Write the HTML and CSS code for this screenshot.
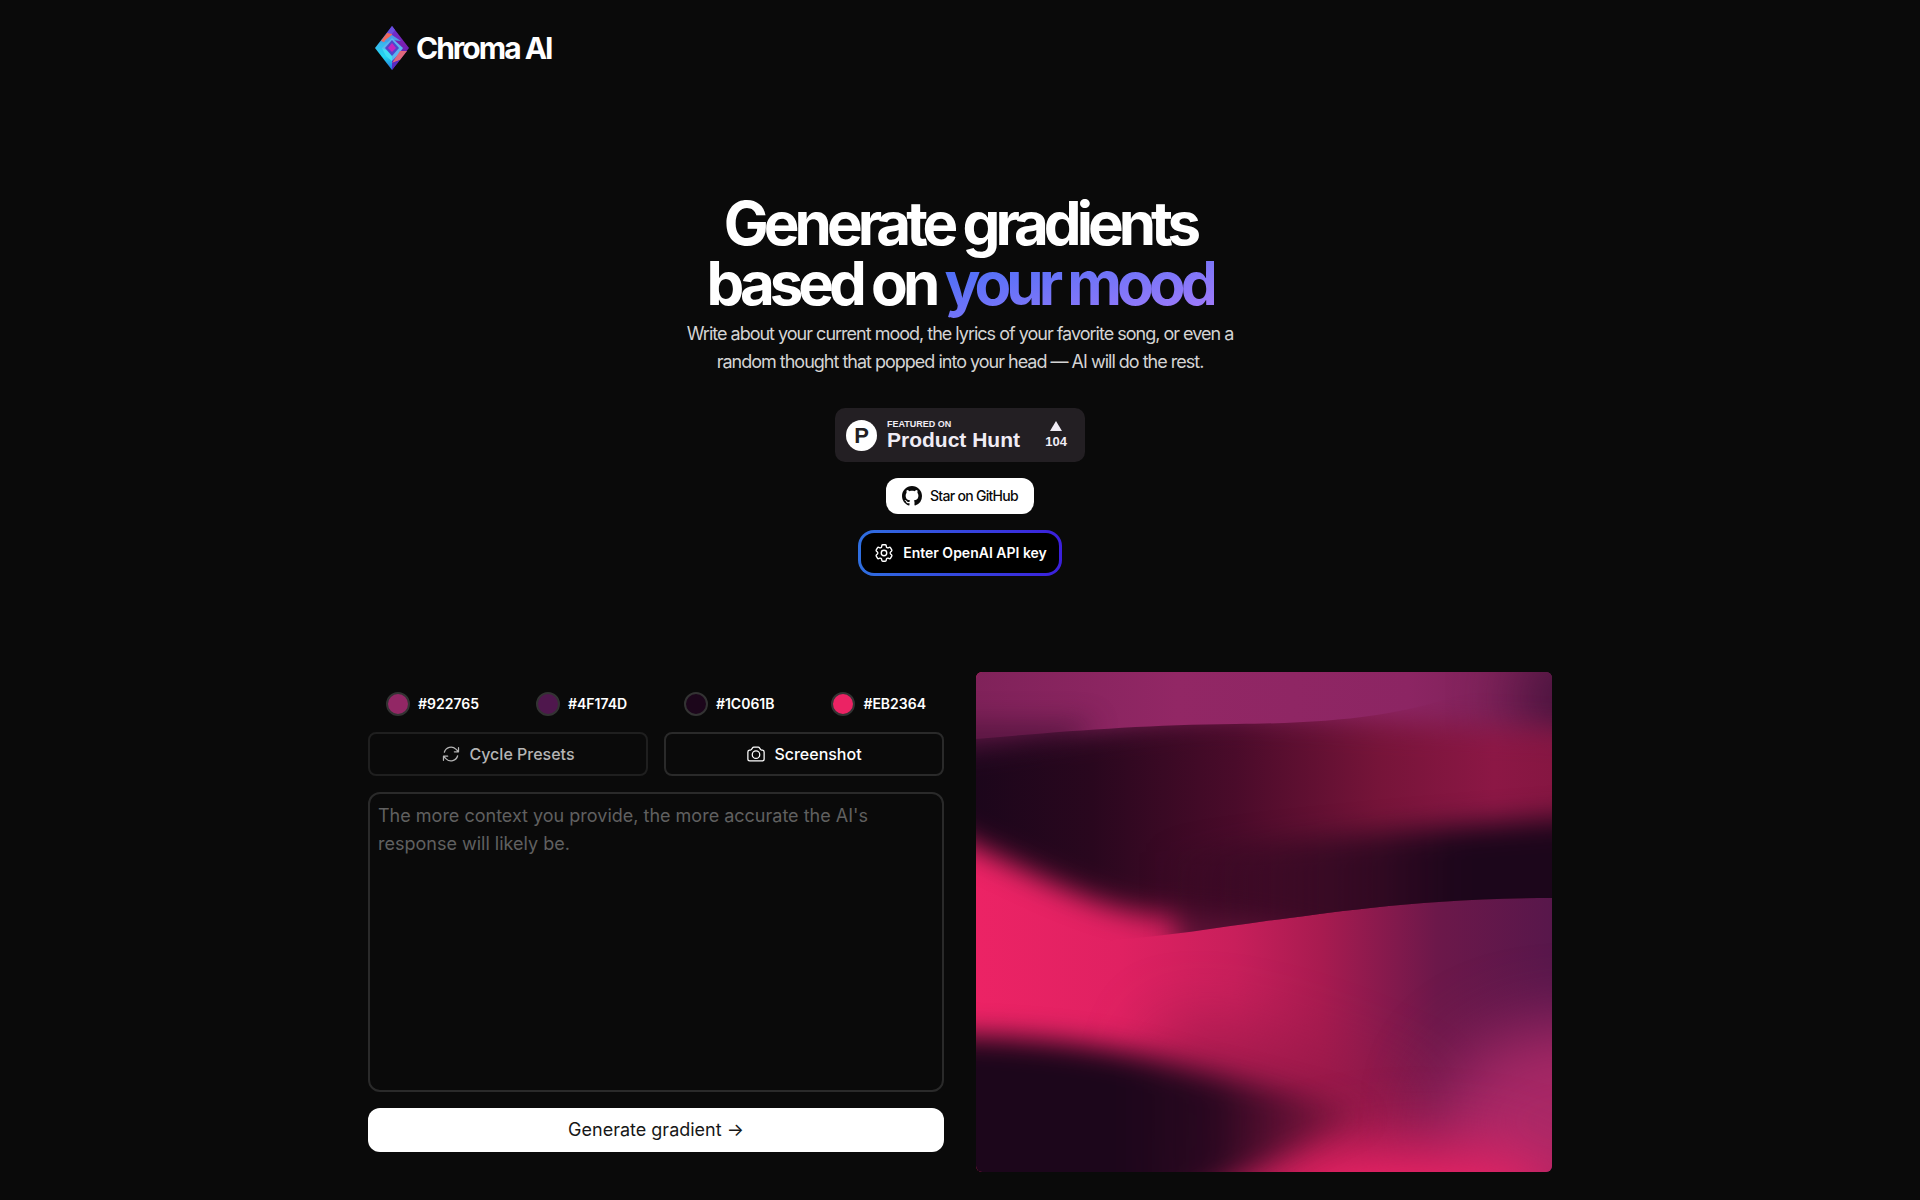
FILE: index.html
```html
<!DOCTYPE html>
<html lang="en">
<head>
  <meta charset="UTF-8">
  <meta name="viewport" content="width=device-width, initial-scale=1">
  <title>Chroma AI</title>
  <link rel="stylesheet" href="styles.css">
</head>
<body>
  <header class="header container">
    <a class="brand" href="#">
      <svg class="brand-logo" viewBox="0 0 34 44" aria-hidden="true">
        <defs>
          <linearGradient id="logoLeft" x1="0" y1="0" x2="0" y2="1">
            <stop offset="0" stop-color="#3b2fd0"/>
            <stop offset="0.4" stop-color="#39b6ee"/>
            <stop offset="0.7" stop-color="#20d8f0"/>
            <stop offset="1" stop-color="#2b6be0"/>
          </linearGradient>
          <linearGradient id="logoRight" x1="0" y1="0" x2="0" y2="1">
            <stop offset="0" stop-color="#6a35d8"/>
            <stop offset="0.4" stop-color="#7a1fb0"/>
            <stop offset="1" stop-color="#4a2bc0"/>
          </linearGradient>
        </defs>
        <path d="M17 0 0 22l17 22z" fill="url(#logoLeft)"/>
        <path d="m17 0 17 22-17 22z" fill="url(#logoRight)"/>
        <path d="M12 7 6 15l3 1 8-7V5z" fill="#f0685c"/>
        <path d="M17 0l-5 7 5 1 3-4z" fill="#6b4fe0"/>
        <path d="m9 15 8-6 9 6-9-1z" fill="#4b9fe8"/>
        <path d="m17 12-10 10 4 8 6 5 6-6 5-7z" fill="#5cb4f0"/>
        <path d="m7 22 4 8 6 5v-8z" fill="#3fe0f4"/>
        <path d="m17 14-7 8 7 8 7-8z" fill="#5046cc"/>
        <path d="m17 17-4 5 4 4 4-4z" fill="#c425c0"/>
        <path d="m25 25 7 0-7 9-8 3z" fill="#e0687c"/>
        <path d="m17 37 8-3-8 10z" fill="#5a2bc0"/>
      </svg>
      <span>Chroma AI</span>
    </a>
  </header>

  <main class="container">
    <section class="hero">
      <h1>Generate gradients<br>based on <span class="mood">your mood</span></h1>
      <p>Write about your current mood, the lyrics of your favorite song, or even a random thought that popped into your head — AI will do the rest.</p>

      <div class="links">
        <a class="ph-badge" href="#">
          <span class="ph-logo">P</span>
          <span class="ph-text">
            <span class="ph-small">FEATURED ON</span>
            <span class="ph-name">Product Hunt</span>
          </span>
          <span class="ph-votes">
            <svg viewBox="0 0 12 10" width="12" height="10" aria-hidden="true"><path d="M6 0l6 10H0z" fill="currentColor"/></svg>
            <span>104</span>
          </span>
        </a>
        <a class="github" href="#">
          <svg viewBox="0 0 16 16" width="20" height="20" fill="currentColor" aria-hidden="true"><path d="M8 0C3.58 0 0 3.58 0 8c0 3.54 2.29 6.53 5.47 7.59.4.07.55-.17.55-.38 0-.19-.01-.82-.01-1.49-2.01.37-2.53-.49-2.69-.94-.09-.23-.48-.94-.82-1.13-.28-.15-.68-.52-.01-.53.63-.01 1.08.58 1.23.82.72 1.21 1.87.87 2.33.66.07-.52.28-.87.51-1.07-1.78-.2-3.64-.89-3.64-3.95 0-.87.31-1.59.82-2.15-.08-.2-.36-1.02.08-2.12 0 0 .67-.21 2.2.82.64-.18 1.32-.27 2-.27s1.36.09 2 .27c1.53-1.04 2.2-.82 2.2-.82.44 1.1.16 1.92.08 2.12.51.56.82 1.27.82 2.15 0 3.07-1.87 3.75-3.65 3.95.29.25.54.73.54 1.48 0 1.07-.01 1.93-.01 2.2 0 .21.15.46.55.38A8.01 8.01 0 0 0 16 8c0-4.42-3.58-8-8-8z"/></svg>
          Star on GitHub
        </a>
        <button class="api-key" type="button">
          <svg class="icon" viewBox="0 0 24 24" width="22" height="22" aria-hidden="true"><path d="M9.594 3.94c.09-.542.56-.94 1.11-.94h2.593c.55 0 1.02.398 1.11.94l.213 1.281c.063.374.313.686.645.87.074.04.147.083.22.127.325.196.72.257 1.075.124l1.217-.456a1.125 1.125 0 0 1 1.37.49l1.296 2.247a1.125 1.125 0 0 1-.26 1.431l-1.003.827c-.293.241-.438.613-.43.992a7.723 7.723 0 0 1 0 .255c-.008.378.137.75.43.991l1.004.827c.424.35.534.955.26 1.43l-1.298 2.247a1.125 1.125 0 0 1-1.369.491l-1.217-.456c-.355-.133-.75-.072-1.076.124a6.47 6.47 0 0 1-.22.128c-.331.183-.581.495-.644.869l-.213 1.281c-.09.543-.56.94-1.11.94h-2.594c-.55 0-1.019-.398-1.11-.94l-.213-1.281c-.062-.374-.312-.686-.644-.87a6.52 6.52 0 0 1-.22-.127c-.325-.196-.72-.257-1.076-.124l-1.217.456a1.125 1.125 0 0 1-1.369-.49l-1.297-2.247a1.125 1.125 0 0 1 .26-1.431l1.004-.827c.292-.24.437-.613.43-.991a6.932 6.932 0 0 1 0-.255c.007-.38-.138-.751-.43-.992l-1.004-.827a1.125 1.125 0 0 1-.26-1.43l1.297-2.247a1.125 1.125 0 0 1 1.37-.491l1.216.456c.356.133.751.072 1.076-.124.072-.044.146-.086.22-.128.332-.183.582-.495.644-.869l.214-1.28Z"/><path d="M15 12a3 3 0 1 1-6 0 3 3 0 0 1 6 0Z"/></svg>
          Enter OpenAI API key
        </button>
      </div>
    </section>

    <section class="workspace">
      <form class="controls">
        <ul class="swatches">
          <li><span class="dot dot-plum"></span>#922765</li>
          <li><span class="dot dot-purple"></span>#4F174D</li>
          <li><span class="dot dot-night"></span>#1C061B</li>
          <li><span class="dot dot-pink"></span>#EB2364</li>
        </ul>
        <div class="actions">
          <button class="action muted" type="button">
            <svg class="icon" viewBox="0 0 24 24" width="20" height="20" aria-hidden="true"><path d="M16.023 9.348h4.992v-.001M2.985 19.644v-4.992m0 0h4.992m-4.993 0 3.181 3.183a8.25 8.25 0 0 0 13.803-3.7M4.031 9.865a8.25 8.25 0 0 1 13.803-3.7l3.181 3.182m0-4.991v4.99"/></svg>
            Cycle Presets
          </button>
          <button class="action" type="button">
            <svg class="icon" viewBox="0 0 24 24" width="20" height="20" aria-hidden="true"><path d="M6.827 6.175A2.31 2.31 0 0 1 5.186 7.23c-.38.054-.757.112-1.134.175C2.999 7.58 2.25 8.507 2.25 9.574V18a2.25 2.25 0 0 0 2.25 2.25h15A2.25 2.25 0 0 0 21.75 18V9.574c0-1.067-.75-1.994-1.802-2.169a47.865 47.865 0 0 0-1.134-.175 2.31 2.31 0 0 1-1.64-1.055l-.822-1.316a2.192 2.192 0 0 0-1.736-1.039 48.774 48.774 0 0 0-5.232 0 2.192 2.192 0 0 0-1.736 1.039l-.821 1.316Z"/><path d="M16.5 12.75a4.5 4.5 0 1 1-9 0 4.5 4.5 0 0 1 9 0Z"/></svg>
            Screenshot
          </button>
        </div>
        <textarea class="prompt" aria-label="Your mood" placeholder="The more context you provide, the more accurate the AI's response will likely be."></textarea>
        <button class="generate" type="button">Generate gradient →</button>
      </form>

      <svg class="preview" viewBox="0 0 576 500" preserveAspectRatio="none" role="img" aria-label="Generated gradient">
        <defs>
          <filter id="soft" filterUnits="userSpaceOnUse" x="-300" y="-200" width="1200" height="1000" color-interpolation-filters="sRGB"><feGaussianBlur stdDeviation="14"/></filter>
          <filter id="softer" filterUnits="userSpaceOnUse" x="-300" y="-200" width="1200" height="1000" color-interpolation-filters="sRGB"><feGaussianBlur stdDeviation="34"/></filter>
          <linearGradient id="lower" gradientUnits="userSpaceOnUse" x1="0" x2="576" y1="0" y2="0">
            <stop offset="0" stop-color="#ec2365"/>
            <stop offset="0.25" stop-color="#e02162"/>
            <stop offset="0.45" stop-color="#c81f5b"/>
            <stop offset="0.6" stop-color="#a81b50"/>
            <stop offset="0.8" stop-color="#6c184a"/>
            <stop offset="1" stop-color="#58174b"/>
          </linearGradient>
          <linearGradient id="top" x1="0" x2="1" y1="0" y2="0">
            <stop offset="0" stop-color="#80225a"/>
            <stop offset="0.35" stop-color="#922765"/>
            <stop offset="0.75" stop-color="#8c2563"/>
            <stop offset="1" stop-color="#762053"/>
          </linearGradient>
          <linearGradient id="band" x1="0" x2="1" y1="0" y2="0">
            <stop offset="0" stop-color="#1c061b"/>
            <stop offset="0.2" stop-color="#29071e"/>
            <stop offset="0.45" stop-color="#4a0b2a"/>
            <stop offset="0.7" stop-color="#761439"/>
            <stop offset="0.9" stop-color="#8c1745"/>
            <stop offset="1" stop-color="#861642"/>
          </linearGradient>
          <linearGradient id="nightFade" gradientUnits="userSpaceOnUse" x1="180" x2="480" y1="0" y2="0">
            <stop offset="0" stop-color="#1c061b" stop-opacity="0"/>
            <stop offset="0.55" stop-color="#1c061b" stop-opacity="0.6"/>
            <stop offset="1" stop-color="#1c061b"/>
          </linearGradient>
          <linearGradient id="blob" gradientUnits="userSpaceOnUse" x1="150" x2="400" y1="0" y2="0">
            <stop offset="0" stop-color="#1c061b"/>
            <stop offset="0.35" stop-color="#1c061b" stop-opacity="0.9"/>
            <stop offset="1" stop-color="#1c061b" stop-opacity="0"/>
          </linearGradient>
          <clipPath id="bandClip"><path d="M-10 68C80 60 160 53 260 52C360 51 420 44 480 24L586 0V226C440 226 350 242 290 249C240 256 190 264 140 268L-10 320Z"/></clipPath>
          <mask id="bandMask" maskUnits="userSpaceOnUse" x="0" y="0" width="576" height="500">
            <path d="M-100 84C60 72 130 46 260 42C380 46 480 56 700 62V300H440C350 256 260 244 180 243C120 236 70 208 -100 126Z" fill="#fff" filter="url(#soft)"/>
          </mask>
        </defs>
        <rect width="576" height="500" fill="url(#lower)"/>
        <path d="M190 350C270 350 360 380 460 430L300 520L150 480Z" fill="#921846" opacity="0.7" filter="url(#softer)"/>
        <ellipse cx="600" cy="450" rx="140" ry="100" fill="#a82866" filter="url(#softer)"/>
        <ellipse cx="440" cy="535" rx="150" ry="60" fill="#f62467" filter="url(#softer)"/>
        <path d="M-100 362C60 362 130 372 210 396C290 418 380 430 400 446C330 470 270 500 210 530L-100 560Z" fill="url(#blob)" filter="url(#soft)"/>
        <path d="M0 0H576V120H0Z" fill="url(#top)"/>
        <path d="M-80 50H120L60 110H-80Z" fill="#4a1238" opacity="0.7" filter="url(#soft)"/>
        <ellipse cx="600" cy="25" rx="56" ry="46" fill="#3c1038" filter="url(#softer)"/>
        <path d="M0 110L576 90V225C440 225 350 242 290 249C220 258 190 262 140 264L0 240Z" fill="url(#lower)"/>
        <g clip-path="url(#bandClip)">
          <path d="M200 170L640 120V300H200Z" fill="#5c1236" filter="url(#soft)"/>
          <g mask="url(#bandMask)">
            <rect width="576" height="300" fill="url(#band)"/>
            <path d="M100 190C280 170 440 156 700 138V320H100Z" fill="url(#nightFade)" filter="url(#soft)"/>
          </g>
        </g>
      </svg>
    </section>
  </main>
</body>
</html>
```
FILE: styles.css
```css
* {
  box-sizing: border-box;
}

body {
  margin: 0;
  background: #0a0a0a;
  color: #fff;
  font-family: Inter, "Liberation Sans", sans-serif;
  font-size: 16px;
  line-height: 24px;
  font-optical-sizing: none;
}

a {
  color: inherit;
  text-decoration: none;
}

button {
  font: inherit;
  color: inherit;
  cursor: pointer;
}

.container {
  max-width: 1216px;
  margin: 0 auto;
  padding: 0 16px;
}

.icon {
  fill: none;
  stroke: currentColor;
  stroke-width: 1.5;
  stroke-linecap: round;
  stroke-linejoin: round;
}

.header {
  padding-top: 24px;
}

.brand {
  display: inline-flex;
  align-items: center;
  gap: 7px;
  height: 48px;
  padding-left: 7px;
  font-size: 30px;
  font-weight: 700;
  letter-spacing: -2px;
}

.brand-logo {
  width: 34px;
  height: 44px;
}

.hero {
  display: flex;
  flex-direction: column;
  align-items: center;
  padding-top: 117px;
  text-align: center;
}

h1 {
  margin: 0;
  font-size: 60px;
  line-height: 60px;
  font-weight: 700;
  letter-spacing: -5px;
}

.mood {
  background: linear-gradient(to bottom right, #3b6cf6, #a87cfa);
  -webkit-background-clip: text;
  background-clip: text;
  color: transparent;
}

.hero p {
  max-width: 576px;
  margin: 7px 0 0;
  color: #d4d4d4;
  font-size: 18px;
  line-height: 28px;
  letter-spacing: -1px;
}

.links {
  display: flex;
  flex-direction: column;
  align-items: center;
  gap: 16px;
  margin-top: 32px;
}

.ph-badge {
  display: flex;
  align-items: center;
  width: 250px;
  height: 54px;
  padding: 0 18px 0 11px;
  border-radius: 10px;
  background: #231f23;
  color: #f0ecf5;
  font-family: "Liberation Sans", Arial, sans-serif;
  font-weight: 700;
}

.ph-logo {
  width: 31px;
  height: 31px;
  border-radius: 50%;
  background: #fff;
  color: #231f23;
  font-size: 22px;
  line-height: 31px;
}

.ph-text {
  display: flex;
  flex-direction: column;
  margin-left: 10px;
  text-align: left;
}

.ph-small {
  font-size: 9px;
  line-height: 10px;
}

.ph-name {
  font-size: 21px;
  line-height: 22px;
}

.ph-votes {
  display: flex;
  flex-direction: column;
  align-items: center;
  gap: 4px;
  margin-left: auto;
  font-size: 13px;
  line-height: 14px;
}

.github {
  display: flex;
  align-items: center;
  gap: 8px;
  height: 36px;
  padding: 0 16px;
  border-radius: 12px;
  background: #fff;
  color: #0a0a0a;
  font-size: 14px;
  font-weight: 500;
  letter-spacing: -0.05em;
}

.api-key {
  display: flex;
  align-items: center;
  gap: 8px;
  height: 46px;
  padding: 0 12px;
  border: 3px solid transparent;
  border-radius: 16px;
  background:
    linear-gradient(#000, #000) padding-box,
    linear-gradient(to right, #2f6fe0, #3b1fdc) border-box;
  font-size: 14px;
  font-weight: 600;
}

.workspace {
  display: grid;
  grid-template-columns: 1fr 1fr;
  align-items: center;
  gap: 32px;
  padding: 96px 0 28px;
}

.controls {
  display: flex;
  flex-direction: column;
  gap: 16px;
}

.swatches {
  display: flex;
  justify-content: space-between;
  margin: 0;
  padding: 0 18px;
  list-style: none;
  font-size: 14px;
  font-weight: 600;
}

.swatches li {
  display: flex;
  align-items: center;
  gap: 8px;
}

.dot {
  width: 24px;
  height: 24px;
  border: 2px solid #333;
  border-radius: 50%;
}

.dot-plum {
  background: #922765;
}

.dot-purple {
  background: #4f174d;
}

.dot-night {
  background: #1c061b;
}

.dot-pink {
  background: #eb2364;
}

.actions {
  display: grid;
  grid-template-columns: 1fr 1fr;
  gap: 16px;
}

.action {
  display: flex;
  align-items: center;
  justify-content: center;
  gap: 8px;
  height: 44px;
  border: 2px solid #2a2a2a;
  border-radius: 8px;
  background: transparent;
  font-weight: 500;
}

.muted {
  border-color: #1f1f1f;
  color: #b5b5b5;
}

.prompt {
  display: block;
  width: 100%;
  height: 300px;
  padding: 8px;
  border: 2px solid #2a2a2a;
  border-radius: 12px;
  background: transparent;
  color: #fff;
  font: inherit;
  font-size: 18px;
  line-height: 28px;
  resize: none;
}

.prompt::placeholder {
  color: #606060;
}

.generate {
  height: 44px;
  border: 0;
  border-radius: 12px;
  background: #fff;
  color: #171717;
  font-size: 18px;
}

.preview {
  display: block;
  width: 100%;
  height: 500px;
  border-radius: 6px;
}
```
